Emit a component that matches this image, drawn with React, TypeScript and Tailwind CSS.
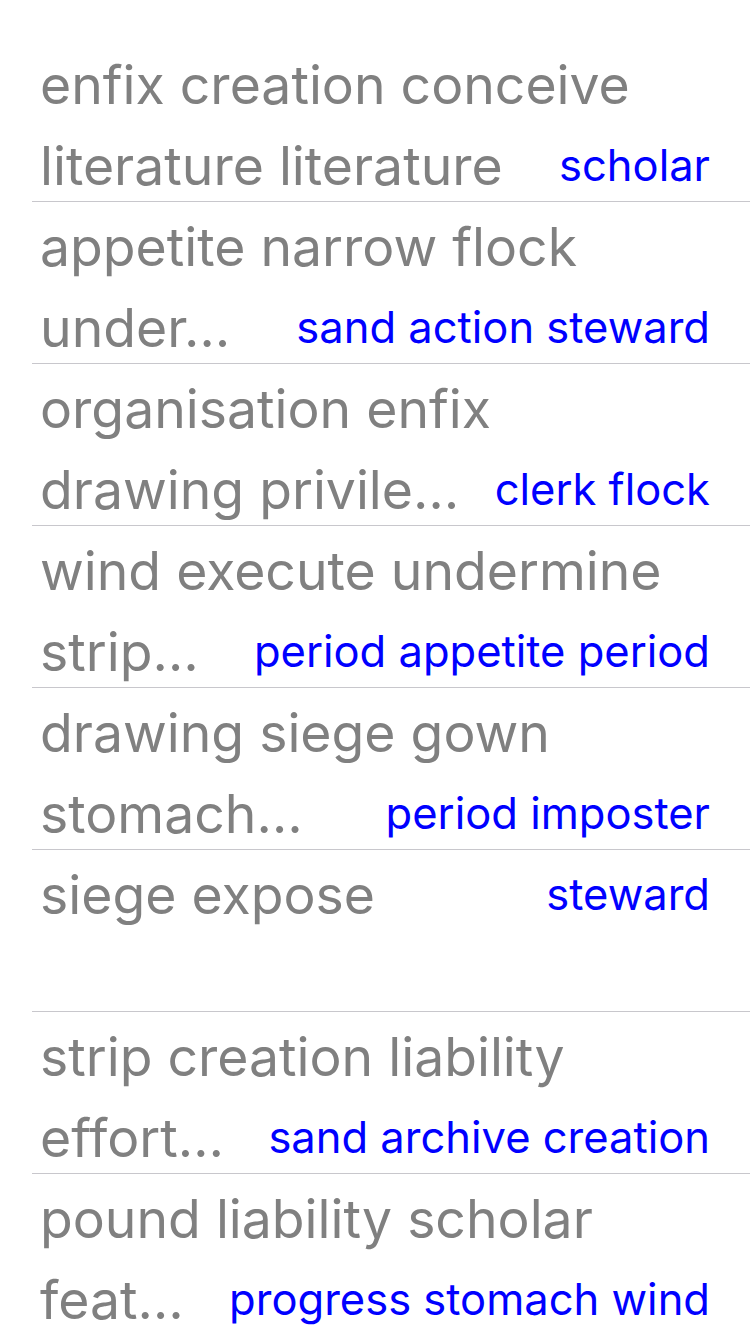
const rows = [
  { lines: ['enfix creation conceive', 'literature literature'], detail: 'scholar' },
  { lines: ['appetite narrow flock', 'under…'], detail: 'sand action steward' },
  { lines: ['organisation enfix', 'drawing privile…'], detail: 'clerk flock' },
  { lines: ['wind execute undermine', 'strip…'], detail: 'period appetite period' },
  { lines: ['drawing siege gown', 'stomach…'], detail: 'period imposter' },
  { lines: ['siege expose'], detail: 'steward' },
  { lines: ['strip creation liability', 'effort…'], detail: 'sand archive creation' },
  { lines: ['pound liability scholar', 'feat…'], detail: 'progress stomach wind' },
]

function Row({ lines, detail }: { lines: string[]; detail: string }) {
  return (
    <div className="ml-8 h-[162px] border-b border-[#c8c7cc] pl-2 pr-10">
      <div className="flex items-end justify-between gap-6 pt-1">
        <div className="min-w-0 text-[53.5px] leading-[81px] text-[#808080]">
          {lines.map((line) => (
            <div key={line} className="whitespace-nowrap">
              {line}
            </div>
          ))}
        </div>
        <div className="shrink-0 whitespace-nowrap text-[43.5px] leading-[81px] text-[#0000ff]">
          {detail}
        </div>
      </div>
    </div>
  )
}

export default function App() {
  return (
    <div
      className="h-[1334px] w-[750px] overflow-hidden bg-white pt-10"
      style={{ fontFamily: 'Inter, "Noto Sans", sans-serif' }}
    >
      {rows.map((row, i) => (
        <Row key={i} lines={row.lines} detail={row.detail} />
      ))}
    </div>
  )
}
